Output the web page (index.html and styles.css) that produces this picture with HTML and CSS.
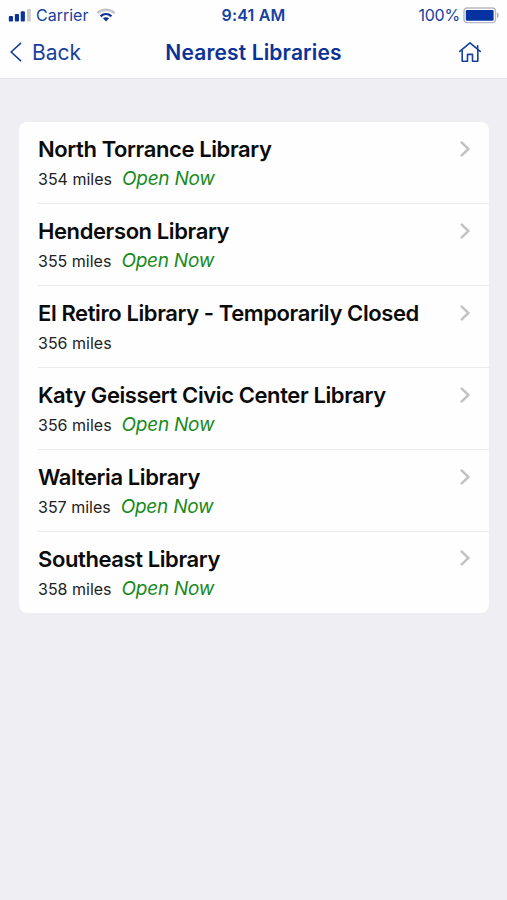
FILE: index.html
```html
<!DOCTYPE html>
<html lang="en">
<head>
<meta charset="utf-8">
<title>Nearest Libraries</title>
<link rel="stylesheet" href="styles.css">
</head>
<body>
<header class="header">
  <div class="status">
    <div class="status-left">
      <svg class="signal" width="23" height="14" viewBox="0 0 23 14"><g fill="#0b3298"><rect x="0.8" y="8" width="4.2" height="5.5" rx="1"/><rect x="6.8" y="6" width="4.2" height="7.5" rx="1"/><rect x="12.7" y="3.2" width="4.2" height="10.3" rx="1"/></g><rect x="19" y="1" width="3.8" height="12.5" rx="1" fill="#c9c9cd"/></svg>
      <span class="carrier">Carrier</span>
      <svg class="wifi" width="20" height="14" viewBox="0 0 20 14"><path d="M1.4 5.1C6.4.6 13.6.6 18.6 5.1" fill="none" stroke="#c3c5ce" stroke-width="2.4"/><path d="M4.6 8.3C7.8 5.4 12.2 5.4 15.4 8.3" fill="none" stroke="#0b3298" stroke-width="2.3"/><path d="M6.9 10.3C8.8 8.8 11.2 8.8 13.1 10.3L10 13.4Z" fill="#0b3298"/></svg>
    </div>
    <span class="time">9:41 AM</span>
    <div class="status-right">
      <span class="percent">100%</span>
      <svg class="battery" width="36" height="17" viewBox="0 0 36 17"><rect x="1" y="1" width="31.5" height="14.6" rx="3.3" fill="#fff" stroke="#b5b7c1" stroke-width="1.4"/><rect x="2.8" y="2.9" width="27.8" height="10.9" rx="1.4" fill="#0432a0"/><path d="M34 5.4C36.2 6.1 36.2 10.2 34 11Z" fill="#aaacb8"/></svg>
    </div>
  </div>
  <nav class="nav">
    <a class="back"><svg width="13" height="22" viewBox="0 0 13 22"><path d="M12 1.8L2.2 11L12 20.2" fill="none" stroke="#17419f" stroke-width="1.6"/></svg><span class="back-label">Back</span></a>
    <h1 class="heading">Nearest Libraries</h1>
    <a class="home"><svg width="24" height="22" viewBox="0 0 24 22"><g fill="none" stroke="#17419f" stroke-width="1.6" stroke-linejoin="round" stroke-linecap="round"><path d="M1.8 10.4L12 1.8L22.2 10.4"/><path d="M4.2 9.4V20.2H9.5V13.4H14.5V20.2H19.8V9.4"/><path d="M19.6 7.6V4.8"/></g></svg></a>
  </nav>
</header>
<main class="list">
  <a class="row"><div class="info"><h2 class="name">North Torrance Library</h2><p class="meta"><span class="miles">354 miles</span><em class="open">Open Now</em></p></div><svg class="chevron" width="12" height="18" viewBox="0 0 12 18"><path d="M2 1.8L9.4 9L2 16.2"/></svg></a>
  <a class="row"><div class="info"><h2 class="name">Henderson Library</h2><p class="meta"><span class="miles">355 miles</span><em class="open">Open Now</em></p></div><svg class="chevron" width="12" height="18" viewBox="0 0 12 18"><path d="M2 1.8L9.4 9L2 16.2"/></svg></a>
  <a class="row"><div class="info"><h2 class="name">El Retiro Library - Temporarily Closed</h2><p class="meta"><span class="miles">356 miles</span></p></div><svg class="chevron" width="12" height="18" viewBox="0 0 12 18"><path d="M2 1.8L9.4 9L2 16.2"/></svg></a>
  <a class="row"><div class="info"><h2 class="name">Katy Geissert Civic Center Library</h2><p class="meta"><span class="miles">356 miles</span><em class="open">Open Now</em></p></div><svg class="chevron" width="12" height="18" viewBox="0 0 12 18"><path d="M2 1.8L9.4 9L2 16.2"/></svg></a>
  <a class="row"><div class="info"><h2 class="name">Walteria Library</h2><p class="meta"><span class="miles">357 miles</span><em class="open">Open Now</em></p></div><svg class="chevron" width="12" height="18" viewBox="0 0 12 18"><path d="M2 1.8L9.4 9L2 16.2"/></svg></a>
  <a class="row"><div class="info"><h2 class="name">Southeast Library</h2><p class="meta"><span class="miles">358 miles</span><em class="open">Open Now</em></p></div><svg class="chevron" width="12" height="18" viewBox="0 0 12 18"><path d="M2 1.8L9.4 9L2 16.2"/></svg></a>
</main>
</body>
</html>
```
FILE: styles.css
```css
* { box-sizing: border-box; }
body {
  margin: 0;
  min-height: 900px;
  background: #eeeef3;
  color: #0b0b0b;
  font-family: Inter, "Liberation Sans", sans-serif;
}
h1, h2, p { margin: 0; }
svg { display: block; flex: none; }
span, em, h1, h2 { white-space: nowrap; }
.header {
  height: 79px;
  background: #fefefe;
  border-bottom: 1px solid #e4e4e7;
  color: #17419f;
}
.status {
  display: grid;
  grid-template-columns: 1fr auto 1fr;
  align-items: center;
  height: 30px;
  padding: 0 8px;
  font-size: 16px;
  line-height: 20px;
}
.status-left, .status-right { display: flex; align-items: center; }
.status-right { justify-content: flex-end; gap: 3px; }
.carrier { margin-left: 5px; }
.wifi { margin-left: 8px; }
.time { font-weight: 600; letter-spacing: 0.2px; }
.percent { letter-spacing: -0.2px; }
.nav {
  display: grid;
  grid-template-columns: 1fr auto 1fr;
  align-items: center;
  height: 44px;
  padding: 0 9px;
}
.back { display: flex; align-items: center; gap: 10px; }
.back-label { padding-top: 1px; font-size: 21px; line-height: 26px; }
.heading { padding-top: 1px; font-size: 21px; line-height: 26px; font-weight: 600; letter-spacing: 0.15px; color: #0b3298; }
.home { justify-self: end; margin-right: 16px; }
.list {
  width: 470px;
  margin: 43px 0 0 19px;
  border-radius: 8px;
  background: #fefefe;
}
.row {
  display: flex;
  align-items: flex-start;
  height: 81.9px;
  padding-left: 19px;
}
.row:not(:last-child) .info { box-shadow: 30px 0 #ebebee; }
.row:not(:last-child) .info { box-shadow: none; }
.row:not(:last-child) { background: linear-gradient(#ebebee, #ebebee) 19px 81px / 100% 1.5px no-repeat; }
.info {
  flex: 1;
  height: 100%;
  padding-top: 13.5px;
}
.row:first-child .info { padding-top: 13px; }
.name { font-size: 22px; line-height: 28px; font-weight: 600; letter-spacing: -0.4px; }
.meta { display: flex; align-items: baseline; height: 28px; margin-top: 2px; }
.miles { font-size: 16px; line-height: 28px; color: #222; }
.open { margin-left: 10px; font-size: 19px; line-height: 28px; letter-spacing: -0.25px; color: #168a1b; }
.chevron { margin: 18px 18px 0 0; fill: none; stroke: #c3c3c6; stroke-width: 2.5; }
```
